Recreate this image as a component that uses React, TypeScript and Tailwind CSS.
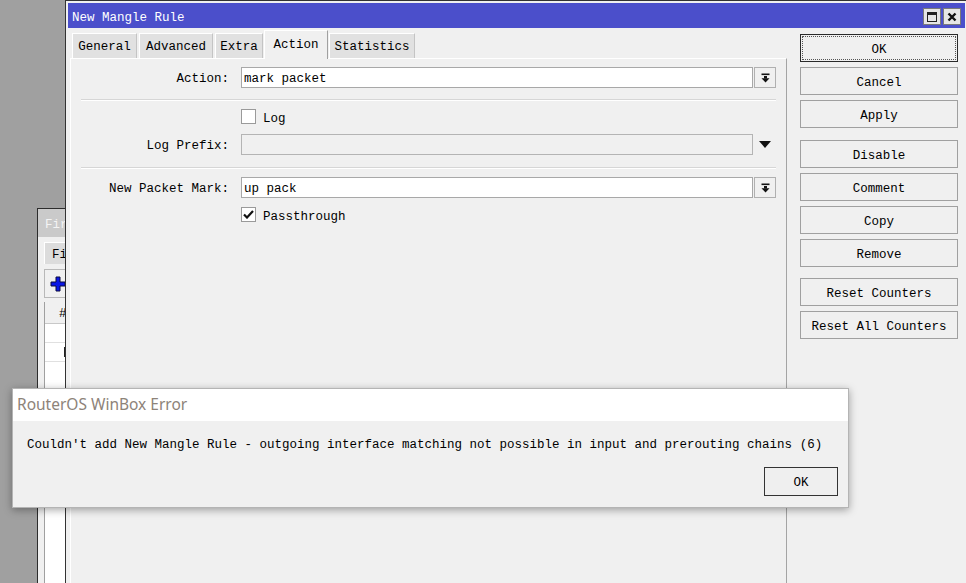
import React from "react";

const mono = "font-['Liberation_Mono','DejaVu_Sans_Mono',monospace] text-[12.5px] leading-none text-black";

const tabs = [
  { name: "General", cls: "w-[65px] mr-[2px]" },
  { name: "Advanced", cls: "w-[74px] mr-[2px]" },
  { name: "Extra", cls: "w-[48px] mr-[1px]" },
  { name: "Action", cls: "w-[64px] mr-[1px]", active: true },
  { name: "Statistics", cls: "w-[86px]" },
];

function DropIcon() {
  return (
    <svg width="9" height="10" viewBox="0 0 9 10">
      <rect x="0.5" y="0.5" width="8" height="1.6" fill="#111" />
      <rect x="3" y="3" width="3" height="2.5" fill="#111" />
      <path d="M0.5 5.2 L8.5 5.2 L4.5 9.5 Z" fill="#111" />
    </svg>
  );
}

function Field(props: { label: string; value?: string; disabled?: boolean; arrowOnly?: boolean }) {
  const { label, value, disabled, arrowOnly } = props;
  return (
    <div className="flex items-center h-[21px]">
      <div className="w-[148px] text-right pt-[4px]">{label}</div>
      <div className="w-[12px]" />
      <div
        className={`flex-1 h-[21px] flex items-center pl-[2px] pt-[4px] border ${
          disabled ? "bg-[#f0f0f0] border-[#b4b4b4]" : "bg-white border-[#a8a8a8]"
        }`}
      >
        {value}
      </div>
      {arrowOnly ? (
        <div className="w-[23px] h-[21px] flex items-center justify-center">
          <svg width="12" height="7" viewBox="0 0 12 7">
            <path d="M0 0 L12 0 L6 7 Z" fill="#111" />
          </svg>
        </div>
      ) : (
        <div className="ml-[1px] w-[22px] h-[21px] flex items-center justify-center bg-[#f0f0f0] border border-[#b0b0b0]">
          <DropIcon />
        </div>
      )}
    </div>
  );
}

function Check(props: { label: string; checked?: boolean }) {
  return (
    <div className="flex items-center h-[15px]">
      <div className="w-[160px]" />
      <div className="w-[15px] h-[15px] bg-white border border-[#9a9a9a] flex items-center justify-center">
        {props.checked && (
          <svg width="11" height="9" viewBox="0 0 11 9">
            <path d="M1 4.5 L4 7.5 L10 1" stroke="#111" strokeWidth="2.2" fill="none" />
          </svg>
        )}
      </div>
      <span className="ml-[7px] pt-[5px]">{props.label}</span>
    </div>
  );
}

function Separator(props: { cls: string }) {
  return <div className={`h-[2px] border-t border-[#d6d6d6] border-b border-b-white ${props.cls}`} />;
}

function SideButton(props: { label: string; cls?: string }) {
  return (
    <div
      className={`h-[28px] flex items-center justify-center pt-[4px] bg-[#f0f0f0] border border-[#a0a0a0] ${props.cls || ""}`}
    >
      {props.label}
    </div>
  );
}

function BackgroundWindow() {
  return (
    <div className="absolute left-[37px] top-[208px] w-[40px] h-[400px] bg-[#f0f0f0] border-l border-t border-[#2c2c2c]">
      <div className="h-[28px] bg-[#cacaca] flex items-center pl-[7px] pt-[4px] text-[#f4f4f4]">Fir</div>
      <div className="ml-[6px] mt-[5px] h-[22px] bg-[#dcdcdc] border-l border-t border-white flex items-center pl-[7px] pt-[3px]">
        Fi
      </div>
      <div className="ml-[6px] mt-[5px] h-[29px] border border-[#b8b8b8] flex items-center pl-[5px]">
        <svg width="16" height="16" viewBox="0 0 16 16">
          <path d="M6 1 H10 V6 H15 V10 H10 V15 H6 V10 H1 V6 H6 Z" fill="#0a16e6" stroke="#0a0a40" strokeWidth="1" />
        </svg>
      </div>
      <div className="ml-[6px] mt-[4px] bg-white border-l border-[#a0a0a0] h-[300px]">
        <div className="h-[22px] bg-[#f0f0f0] border-b border-[#c8c8c8] flex items-center pl-[14px] pt-[3px]">#</div>
        <div className="h-[19px] border-b border-[#e0e0e0]" />
        <div className="h-[19px] border-b border-[#e0e0e0] flex items-center pl-[19px]">
          <div className="w-[2px] h-[10px] bg-[#222]" />
        </div>
      </div>
    </div>
  );
}

function MainWindow() {
  return (
    <div className="absolute left-[65px] top-0 w-[902px] h-[600px] bg-[#f0f0f0] border-l border-t border-[#333] p-[2px] flex flex-col">
      {/* title bar */}
      <div className="h-[25px] bg-[#4b4fcb] flex items-center justify-between pl-[4px] pr-[4px]">
        <span className="text-white pt-[6px]">New Mangle Rule</span>
        <div className="flex gap-[2px] pt-[2px]">
          <div className="w-[18px] h-[17px] bg-[#e6e6e6] border border-[#7a7a7a] flex items-center justify-center">
            <div className="w-[10px] h-[10px] border border-[#222] border-t-[3px]" />
          </div>
          <div className="w-[18px] h-[17px] bg-[#e6e6e6] border border-[#7a7a7a] flex items-center justify-center">
            <svg width="10" height="10" viewBox="0 0 10 10">
              <path d="M1.5 1.5 L8.5 8.5 M8.5 1.5 L1.5 8.5" stroke="#111" strokeWidth="2.4" />
            </svg>
          </div>
        </div>
      </div>

      <div className="flex flex-1">
        {/* left part */}
        <div className="pl-[2px] pt-[2px] flex flex-col">
          <div className="flex items-end h-[28px] pl-[2px]">
            {tabs.map((t) =>
              t.active ? (
                <div
                  key={t.name}
                  className={`${t.cls} h-[29px] -mb-[1px] relative bg-[#f0f0f0] border-l border-t border-white border-r border-r-[#a0a0a0] flex items-center justify-center pt-[1px]`}
                >
                  {t.name}
                </div>
              ) : (
                <div
                  key={t.name}
                  className={`${t.cls} h-[25px] bg-[#e1e1e1] border-l border-t border-white border-r border-r-[#c4c4c4] flex items-center justify-center pt-[3px]`}
                >
                  {t.name}
                </div>
              )
            )}
          </div>
          <div className="w-[717px] flex-1 border-t border-white border-l border-l-white border-r border-r-[#a4a4a4] pl-[10px] pr-[10px] pt-[8px]">
            <Field label="Action:" value="mark packet" />
            <Separator cls="mt-[11px]" />
            <div className="mt-[8px]">
              <Check label="Log" />
            </div>
            <div className="mt-[10px]">
              <Field label="Log Prefix:" disabled arrowOnly />
            </div>
            <Separator cls="mt-[12px]" />
            <div className="mt-[8px]">
              <Field label="New Packet Mark:" value="up pack" />
            </div>
            <div className="mt-[9px]">
              <Check label="Passthrough" checked />
            </div>
          </div>
        </div>

        {/* right buttons */}
        <div className="ml-[13px] mt-[6px] w-[158px] flex flex-col">
          <div className="h-[28px] border border-[#2a2a2a] p-[1px] bg-[#f0f0f0]">
            <div className="h-full border border-dotted border-[#555] flex items-center justify-center pt-[4px]">OK</div>
          </div>
          <SideButton label="Cancel" cls="mt-[5px]" />
          <SideButton label="Apply" cls="mt-[5px]" />
          <SideButton label="Disable" cls="mt-[12px]" />
          <SideButton label="Comment" cls="mt-[5px]" />
          <SideButton label="Copy" cls="mt-[5px]" />
          <SideButton label="Remove" cls="mt-[5px]" />
          <SideButton label="Reset Counters" cls="mt-[11px]" />
          <SideButton label="Reset All Counters" cls="mt-[5px]" />
        </div>
      </div>
    </div>
  );
}

function ErrorDialog() {
  return (
    <div className="absolute left-[12px] top-[388px] w-[837px] h-[120px] border border-[#b4b4b4] bg-[#f0f0f0] shadow-[0_2px_8px_rgba(0,0,0,0.35)] flex flex-col">
      <div className="h-[32px] bg-white flex items-center pl-[4px] font-['Noto_Sans','Open_Sans',sans-serif] text-[15.5px] text-[#8d8379]">
        RouterOS WinBox Error
      </div>
      <div className="pl-[14px] pt-[18px]">
        Couldn't add New Mangle Rule - outgoing interface matching not possible in input and prerouting chains (6)
      </div>
      <div className="flex justify-end pr-[10px] mt-[15px]">
        <div className="w-[74px] h-[29px] border border-[#333] bg-[#efefef] flex items-center justify-center pt-[4px]">OK</div>
      </div>
    </div>
  );
}

export default function App() {
  return (
    <div className={`relative w-[966px] h-[583px] overflow-hidden bg-[#a0a0a0] ${mono}`}>
      <BackgroundWindow />
      <MainWindow />
      <ErrorDialog />
    </div>
  );
}
